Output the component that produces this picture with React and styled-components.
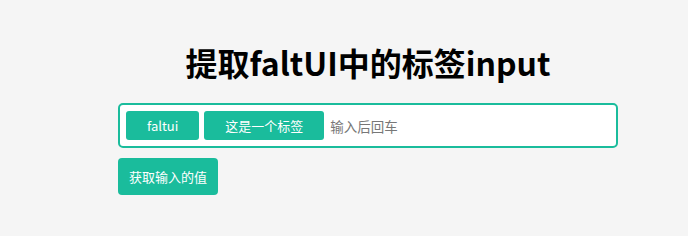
import React, { useState } from "react";
import styled, { createGlobalStyle } from "styled-components";

const GlobalStyle = createGlobalStyle`
  body {
    margin: 0;
    background: #f5f5f5;
    font-family: "Noto Sans CJK SC", "Noto Sans", sans-serif;
  }
`;

const Page = styled.div`
  width: 500px;
  margin-left: 118px;
  padding-top: 21px;
`;

const Title = styled.h1`
  margin: 21px 0;
  text-align: center;
  font-size: 32px;
  line-height: 40px;
  font-weight: 700;
  color: #000;
`;

const TagBox = styled.div`
  display: flex;
  align-items: center;
  gap: 5px;
  box-sizing: border-box;
  width: 500px;
  padding: 6px;
  border: 2px solid #1abc9c;
  border-radius: 5px;
  background: #fff;
`;

const Tag = styled.span`
  display: inline-flex;
  align-items: center;
  height: 29px;
  padding: 0 21px;
  border-radius: 3px;
  background: #1abc9c;
  color: #fff;
  font-size: 13px;
`;

const TagInput = styled.input`
  flex: 1;
  min-width: 0;
  height: 29px;
  padding: 0 0 0 1px;
  border: none;
  outline: none;
  font-family: inherit;
  font-size: 13.5px;
  color: #333;
  &::placeholder {
    color: #777;
  }
`;

const Button = styled.button`
  margin-top: 10px;
  height: 37px;
  padding: 0 11px;
  border: none;
  border-radius: 4px;
  background: #1abc9c;
  color: #fff;
  font-family: inherit;
  font-size: 13px;
  cursor: pointer;
`;

export default function App() {
  const [tags, setTags] = useState(["faltui", "这是一个标签"]);
  const [text, setText] = useState("");

  const onKey = (e) => {
    if (e.key === "Enter" && text.trim()) {
      setTags([...tags, text.trim()]);
      setText("");
    }
  };

  return (
    <>
      <GlobalStyle />
      <Page>
        <Title>提取faltUI中的标签input</Title>
        <TagBox>
          {tags.map((t) => (
            <Tag key={t}>{t}</Tag>
          ))}
          <TagInput
            placeholder="输入后回车"
            value={text}
            onChange={(e) => setText(e.target.value)}
            onKeyDown={onKey}
          />
        </TagBox>
        <Button onClick={() => alert(tags.join(","))}>获取输入的值</Button>
      </Page>
    </>
  );
}
